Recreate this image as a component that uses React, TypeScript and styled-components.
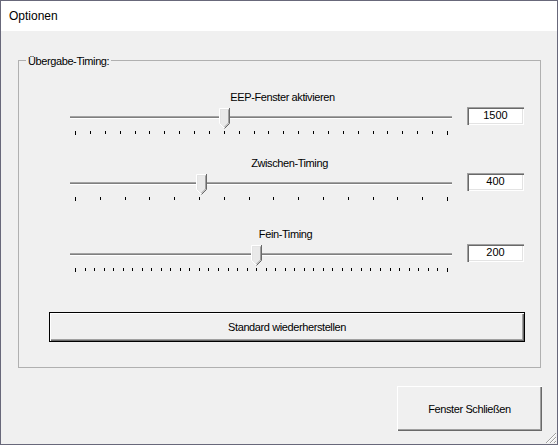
import React from "react";
import styled, { createGlobalStyle } from "styled-components";

const Global = createGlobalStyle`
  html, body { margin: 0; padding: 0; background: #f0f0f0; }
  body { font-family: "Liberation Sans", Arial, sans-serif; }
`;

const Window = styled.div`
  position: relative;
  width: 558px;
  height: 445px;
  box-sizing: border-box;
  border: 1px solid #68687a;
  display: flex;
  flex-direction: column;
  background: #f0f0f0;
  font-family: "Liberation Sans", Arial, sans-serif;
  font-size: 11px;
  letter-spacing: -0.4px;
  color: #000;
`;

const TitleBar = styled.div`
  height: 30px;
  flex: none;
  background: #fff;
  display: flex;
  align-items: center;
  padding-left: 8px;
  font-family: "Liberation Sans", Arial, sans-serif;
  font-size: 12px;
  letter-spacing: 0;
  color: #000;
`;

const Client = styled.div`
  flex: 1;
  display: flex;
  flex-direction: column;
  padding: 29px 15px 0 17px;
`;

const GroupBox = styled.div`
  position: relative;
  height: 308px;
  box-sizing: border-box;
  margin-right: 1px;
  border: 1px solid #b0b0b0;
  padding: 30px 15px 0 51px;
  display: flex;
  flex-direction: column;
`;

const GroupLegend = styled.span`
  position: absolute;
  top: -7px;
  left: 7px;
  padding: 0 2px;
  line-height: 14px;
  background: #f0f0f0;
`;

const SliderBlock = styled.div<{ $top: number }>`
  display: flex;
  flex-direction: column;
  margin-top: ${(p) => p.$top}px;
`;

const SliderLabel = styled.div<{ $shift: number }>`
  width: 382px;
  box-sizing: border-box;
  padding-left: ${(p) => p.$shift}px;
  text-align: center;
  line-height: 13px;
  white-space: nowrap;
`;

const SliderRow = styled.div`
  display: flex;
  align-items: flex-start;
  gap: 15px;
  margin-top: 3px;
`;

const SliderArea = styled.div`
  position: relative;
  width: 382px;
  height: 28px;
  display: flex;
  flex-direction: column;
`;

const Channel = styled.div`
  margin-top: 9px;
  height: 3px;
  box-sizing: border-box;
  border-top: 1px solid #a3a3a3;
  border-bottom: 1px solid #ffffff;
  background: #7f7f7f;
`;

const TickRow = styled.div`
  margin-top: 12px;
  padding: 0 4px 0 5px;
  display: flex;
  justify-content: space-between;
  align-items: flex-start;
`;

const Tick = styled.span<{ $end: boolean }>`
  width: 1px;
  height: ${(p) => (p.$end ? 4 : 3)}px;
  background: #000;
`;

const ThumbWrap = styled.div`
  position: absolute;
  top: 1px;
  width: 11px;
  height: 21px;
  line-height: 0;
`;

const ValueBox = styled.div`
  width: 57px;
  height: 18px;
  box-sizing: border-box;
  background: #fff;
  text-align: center;
  line-height: 17px;
  letter-spacing: 0;
  box-shadow: inset 1px 1px 0 #a0a0a0, inset 2px 2px 0 #696969,
    inset -1px -1px 0 #ffffff, inset -2px -2px 0 #e3e3e3;
`;

const DefaultButton = styled.div`
  margin-top: 40px;
  margin-left: -21px;
  width: 476px;
  height: 30px;
  box-sizing: border-box;
  border: 1px solid #000;
  background: #f0f0f0;
  display: flex;
  align-items: center;
  justify-content: center;
  box-shadow: inset 1px 1px 0 #ffffff, inset -1px -1px 0 #696969,
    inset -2px -2px 0 #a0a0a0;
`;

const Footer = styled.div`
  display: flex;
  justify-content: flex-end;
  margin-top: 18px;
`;

const CloseButton = styled.div`
  width: 145px;
  height: 45px;
  box-sizing: border-box;
  background: #f0f0f0;
  display: flex;
  align-items: center;
  justify-content: center;
  box-shadow: inset 1px 1px 0 #ffffff, inset -1px -1px 0 #696969,
    inset -2px -2px 0 #a0a0a0;
`;

const Grip = styled.div`
  position: absolute;
  right: 0;
  bottom: 0;
  width: 13px;
  height: 13px;
  line-height: 0;
`;

const Thumb = ({ left }: { left: number }) => (
  <ThumbWrap style={{ left }}>
    <svg width="11" height="21" viewBox="0 0 11 21">
      <path d="M0.5 0.5 H10.5 V15.5 L5.5 20.5 L0.5 15.5 Z" fill="#e9e9e9" />
      <path d="M0.5 15.5 V0.5 H10" fill="none" stroke="#ffffff" />
      <path d="M1.5 15 V1.5 H9.5" fill="none" stroke="#e3e3e3" />
      <path d="M10.5 0 V15.5 L5.5 20.5" fill="none" stroke="#696969" />
      <path d="M9.5 1.5 V15 L5.5 19" fill="none" stroke="#a0a0a0" />
      <path d="M0.5 15.5 L5 20" fill="none" stroke="#ffffff" />
    </svg>
  </ThumbWrap>
);

type SliderProps = {
  label: string;
  shift: number;
  top: number;
  value: number;
  min: number;
  max: number;
  ticks: number;
};

const Slider = ({ label, shift, top, value, min, max, ticks }: SliderProps) => {
  const frac = (value - min) / (max - min);
  const tip = Math.round(5 + frac * 372);
  return (
    <SliderBlock $top={top}>
      <SliderLabel $shift={shift}>{label}</SliderLabel>
      <SliderRow>
        <SliderArea>
          <Channel />
          <TickRow>
            {Array.from({ length: ticks }).map((_, i) => (
              <Tick key={i} $end={i === 0 || i === ticks - 1} />
            ))}
          </TickRow>
          <Thumb left={tip - 5} />
        </SliderArea>
        <ValueBox>{value}</ValueBox>
      </SliderRow>
    </SliderBlock>
  );
};

export default function App() {
  return (
    <>
      <Global />
      <Window>
        <TitleBar>Optionen</TitleBar>
        <Client>
          <GroupBox>
            <GroupLegend>Übergabe-Timing:</GroupLegend>
            <Slider label="EEP-Fenster aktivieren" shift={43} top={0} value={1500} min={0} max={3750} ticks={26} />
            <Slider label="Zwischen-Timing" shift={57} top={22} value={400} min={0} max={1184} ticks={16} />
            <Slider label="Fein-Timing" shift={49} top={27} value={200} min={10} max={400} ticks={40} />
            <DefaultButton>Standard wiederherstellen</DefaultButton>
          </GroupBox>
          <Footer>
            <CloseButton>Fenster Schließen</CloseButton>
          </Footer>
        </Client>
        <Grip>
          <svg width="13" height="13" viewBox="0 0 13 13">
            <path d="M12 2 L2 12 M12 6 L6 12 M12 10 L10 12" stroke="#a0a0a0" strokeWidth="1" />
            <path d="M12 3 L3 12 M12 7 L7 12 M12 11 L11 12" stroke="#ffffff" strokeWidth="1" />
          </svg>
        </Grip>
      </Window>
    </>
  );
}
